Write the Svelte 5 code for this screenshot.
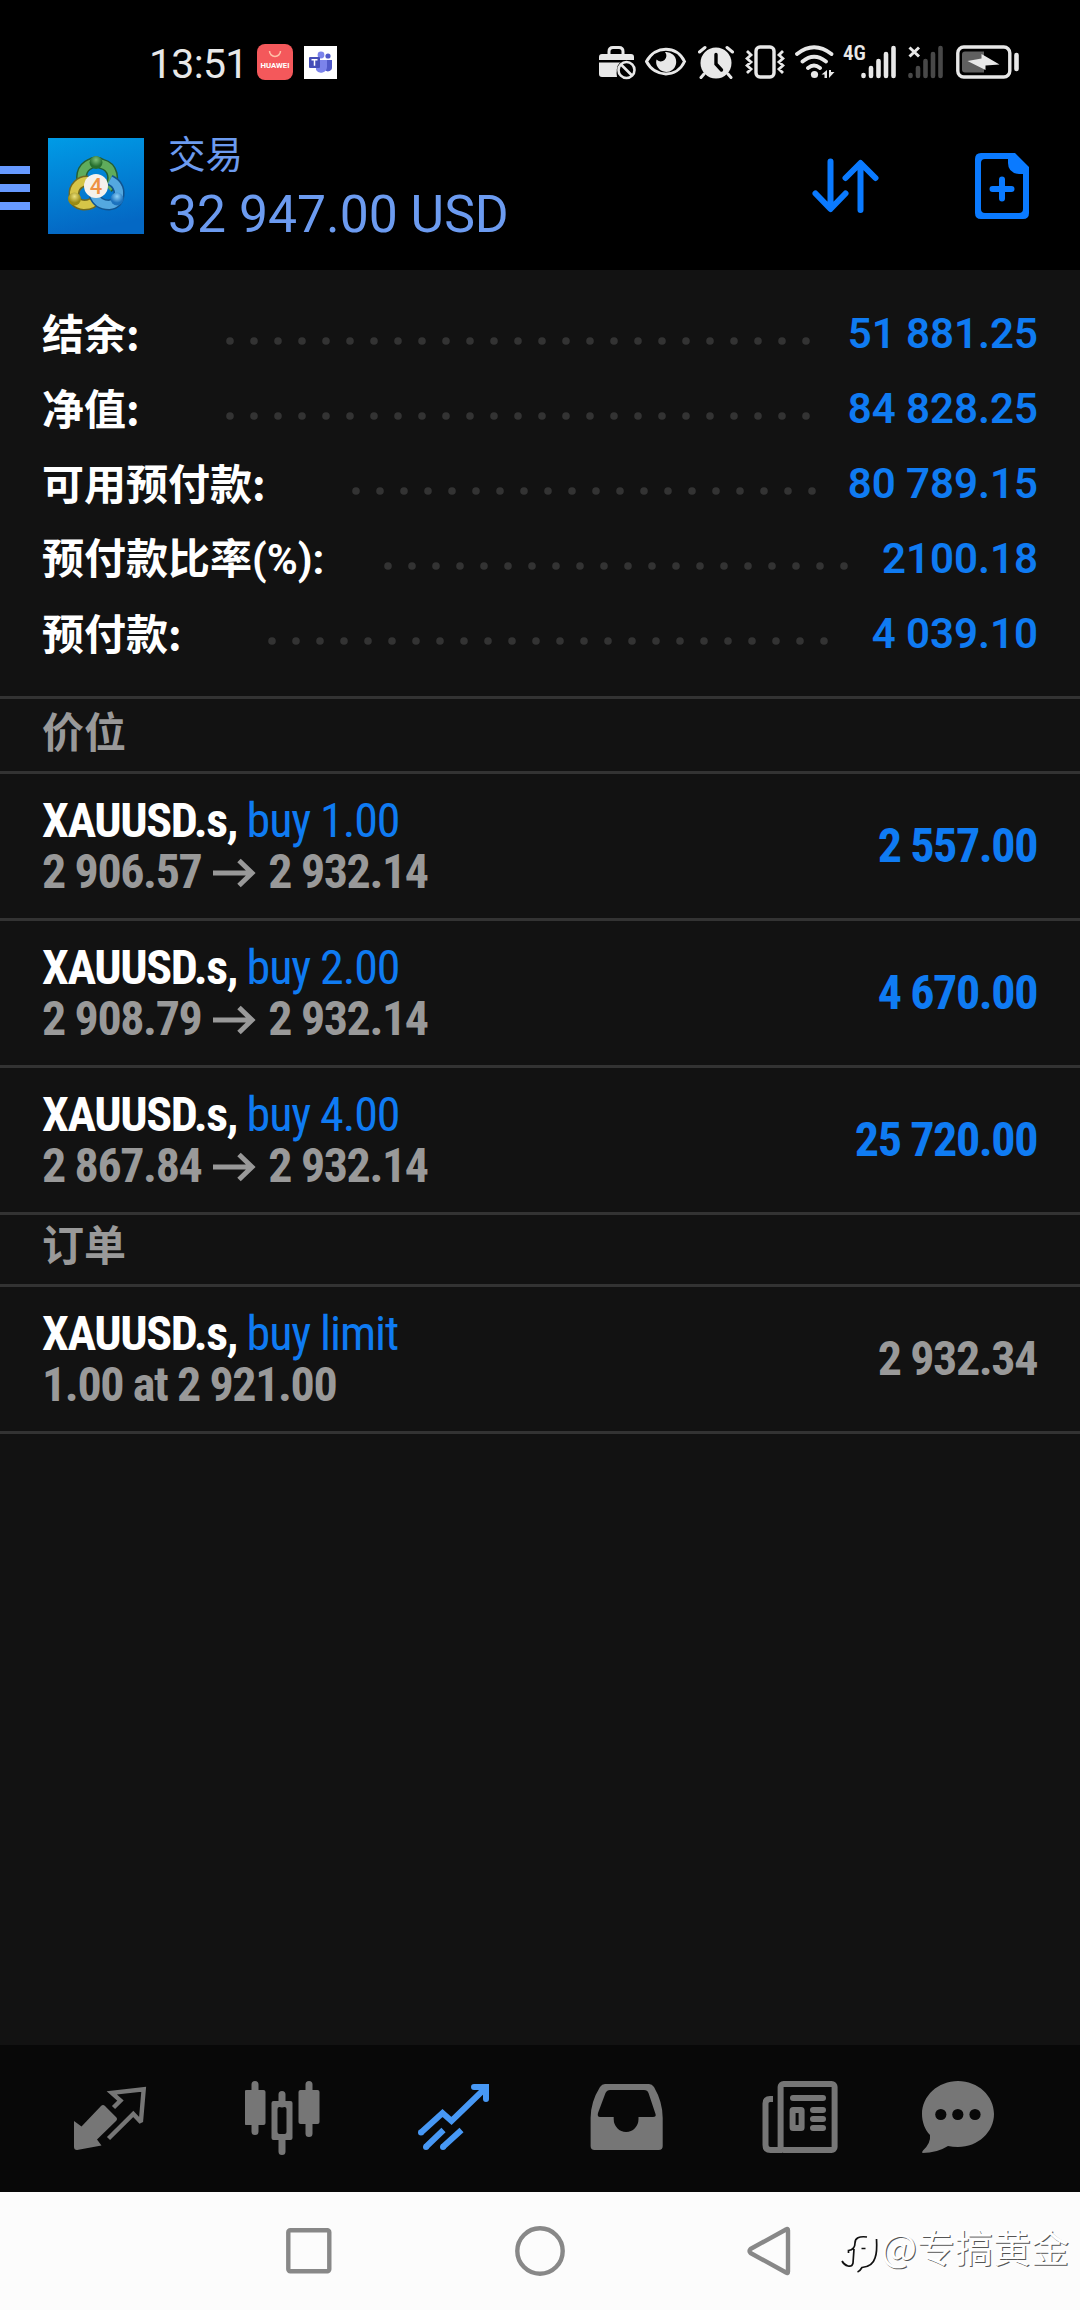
<script lang="ts">
	type Summary = { label: string; value: string; labelWidth: number; dots: number; mixed?: boolean };
	type Trade = { symbol: string; action: string; detail: string[]; amount: string; pending?: boolean };

	const DOT_STEP = 24;

	const summary: Summary[] = [
		{ label: '结余:', value: '51 881.25', labelWidth: 176, dots: 25 },
		{ label: '净值:', value: '84 828.25', labelWidth: 176, dots: 25 },
		{ label: '可用预付款:', value: '80 789.15', labelWidth: 302, dots: 20 },
		{ label: '预付款比率(%):', value: '2100.18', labelWidth: 334, dots: 20, mixed: true },
		{ label: '预付款:', value: '4 039.10', labelWidth: 218, dots: 24 },
	];

	const positions: Trade[] = [
		{ symbol: 'XAUUSD.s,', action: 'buy 1.00', detail: ['2 906.57', '2 932.14'], amount: '2 557.00' },
		{ symbol: 'XAUUSD.s,', action: 'buy 2.00', detail: ['2 908.79', '2 932.14'], amount: '4 670.00' },
		{ symbol: 'XAUUSD.s,', action: 'buy 4.00', detail: ['2 867.84', '2 932.14'], amount: '25 720.00' },
	];

	const orders: Trade[] = [
		{ symbol: 'XAUUSD.s,', action: 'buy limit', detail: ['1.00 at 2 921.00'], amount: '2 932.34', pending: true },
	];
</script>

{#snippet tradeRow(trade: Trade)}
	<div class="trade">
		<div class="trade-info">
			<div class="line"><b>{trade.symbol}</b> <span class="action">{trade.action}</span></div>
			<div class="line detail">
				<span>{trade.detail[0]}</span>
				{#if trade.detail.length > 1}
					<svg class="arrow" width="43" height="30" viewBox="0 0 43 30">
						<path d="M0 15H39M26 2.500L39 15L26 27.500" fill="none" stroke="currentColor" stroke-width="5" />
					</svg>
					<span>{trade.detail[1]}</span>
				{/if}
			</div>
		</div>
		<div class="amount" class:pending={trade.pending}>{trade.amount}</div>
	</div>
{/snippet}

<div class="screen">
	<div class="status">
		<span class="clock">13:51</span>
		<svg class="huawei" width="36" height="36" viewBox="0 0 36 36">
			<rect width="36" height="36" rx="8" fill="#f4585b" />
			<path d="M12.500 7a5.500 5.500 0 0 0 11 0" fill="none" stroke="#ffc0a8" stroke-width="1.500" />
			<text x="18" y="24" text-anchor="middle" textLength="29" lengthAdjust="spacingAndGlyphs" font-size="7.500" font-weight="700" fill="#fff">HUAWEI</text>
		</svg>
		<svg class="teams" width="33" height="33" viewBox="0 0 33 33">
			<rect width="33" height="33" fill="#fff" />
			<circle cx="24" cy="10" r="2.600" fill="#5059c9" />
			<path d="M21 14h7v7a4 4 0 0 1-7 3z" fill="#5059c9" />
			<circle cx="17" cy="9" r="3.400" fill="#7b83eb" />
			<path d="M12 14h11v7a6 6 0 0 1-11 3z" fill="#7b83eb" />
			<rect x="5" y="11" width="11" height="11" rx="1" fill="#464eb8" />
			<path d="M7.500 13.800h6M10.500 13.800v6" stroke="#fff" stroke-width="1.500" />
		</svg>

		<div class="status-icons">
			<svg width="38" height="36" viewBox="0 0 38 36">
				<path d="M10 11V7.500Q10 3.500 14 3.500h6Q24 3.500 24 7.500V11" fill="none" stroke="#e8e8e8" stroke-width="3" />
				<path d="M3 10H32Q35 10 35 13V16H0V13Q0 10 3 10zM0 18.500H23Q16 24 18 33H3Q0 33 0 30z" fill="#e8e8e8" />
				<circle cx="27.500" cy="26" r="9.800" fill="#000" />
				<path d="M22 20.500L33 31.500" stroke="#e8e8e8" stroke-width="2.600" />
				<circle cx="27.500" cy="26" r="8" fill="none" stroke="#e8e8e8" stroke-width="2.600" />
			</svg>
			<svg class="eye" width="42" height="36" viewBox="0 0 42 36">
				<path d="M1.500 17.500C10 1 32 1 39.500 17.500C32 34 10 34 1.500 17.500z" fill="none" stroke="#e8e8e8" stroke-width="3" />
				<path d="M20 8a10 10 0 1 1-8.500 7.500a5 5 0 0 0 8.500-7.500z" fill="#e8e8e8" />
			</svg>
			<svg class="alarm" width="36" height="36" viewBox="0 0 36 36">
				<circle cx="18" cy="19" r="15.500" fill="#e8e8e8" />
				<path d="M1.500 8L7 3.500M34.500 8L29 3.500M6 30L3 33.500M30 30L33 33.500" stroke="#e8e8e8" stroke-width="3" stroke-linecap="round" />
				<path d="M18 10.500V20L23.500 26" fill="none" stroke="#000" stroke-width="3.400" stroke-linecap="round" />
			</svg>
			<svg class="vibrate" width="40" height="36" viewBox="0 0 40 36">
				<rect x="11" y="3" width="18" height="30" rx="4" fill="none" stroke="#e8e8e8" stroke-width="3.400" />
				<path d="M2 7l4 4-4 3.500 4 3.500-4 3.500 4 3.500-4 4M38 7l-4 4 4 3.500-4 3.500 4 3.500-4 3.500 4 4" fill="none" stroke="#e8e8e8" stroke-width="2.800" />
			</svg>
			<svg class="wifi" width="42" height="36" viewBox="0 0 42 36">
				<path d="M2 10Q19 -3.500 36.500 10M7.500 17.500Q19 8 31 17.500M13 24Q19 19 25 24" fill="none" stroke="#e8e8e8" stroke-width="3.800" stroke-linecap="round" />
				<circle cx="19.500" cy="30.500" r="3.600" fill="#e8e8e8" />
				<path d="M26.500 30.500L32 26V34H29.500V30.500zM34 26V34L39.500 28H36V26z" fill="#e8e8e8" />
			</svg>
			<span class="net">4G</span>
			<svg class="signal" width="36" height="36" viewBox="0 0 36 36">
				<path d="M2.500 32V31M10 32V24M17.500 32V17M25 32V10M32.500 32V4" stroke="#e8e8e8" stroke-width="4.600" stroke-linecap="round" />
			</svg>
			<svg class="nosim" width="36" height="36" viewBox="0 0 36 36">
				<path d="M2.500 32V31M10 32V24M17.500 32V17M25 32V10M32.500 32V4" stroke="#484848" stroke-width="4.600" stroke-linecap="round" />
				<path d="M1.500 3.500L11 12.500M11 3.500L1.500 12.500" stroke="#e8e8e8" stroke-width="3" />
			</svg>
			<svg class="battery" width="64" height="36" viewBox="0 0 64 36">
				<rect x="1.800" y="3" width="52" height="30" rx="6" fill="none" stroke="#e8e8e8" stroke-width="3.400" />
				<path d="M9 7.500H28V28.500H9Q6 28.500 6 25.500V10.500Q6 7.500 9 7.500z" fill="#606060" />
				<path d="M11.500 17L25.500 14.500V10L43.500 20.500L29.500 21.500V26z" fill="#e8e8e8" />
				<path d="M60.500 11V25" stroke="#e8e8e8" stroke-width="4.600" stroke-linecap="round" />
			</svg>
		</div>
	</div>

	<header>
		<svg class="menu" width="30" height="44" viewBox="0 0 30 44">
			<path d="M0 4H30M0 22H30M0 40H30" stroke="#6699ff" stroke-width="8" />
		</svg>
		<svg class="logo" width="96" height="96" viewBox="0 0 96 96">
			<defs>
				<linearGradient id="sky" x1="0" y1="0" x2="0.200" y2="1">
					<stop offset="0" stop-color="#009be6" />
					<stop offset="1" stop-color="#0468c4" />
				</linearGradient>
				<radialGradient id="green" cy="0.300"><stop offset="0" stop-color="#7cc07a" /><stop offset="1" stop-color="#27702f" /></radialGradient>
				<radialGradient id="gold" cy="0.300"><stop offset="0" stop-color="#ece27c" /><stop offset="1" stop-color="#998a14" /></radialGradient>
				<radialGradient id="blue" cy="0.300"><stop offset="0" stop-color="#8fd2f8" /><stop offset="1" stop-color="#1c72be" /></radialGradient>
			</defs>
			<rect width="96" height="96" fill="url(#sky)" />
			<g fill="none">
				<path d="M37 48A14 14 0 0 1 42 26Q48 22 54 26A14 14 0 0 1 60 50" stroke="#245f35" stroke-width="11" />
				<path d="M37 48A14 14 0 0 1 42 26Q48 22 54 26A14 14 0 0 1 60 50" stroke="#5fac5c" stroke-width="8" />
				<path d="M40 43A13 13 0 0 0 26 57Q26 66 36 67Q45 67 49 60" stroke="#71691f" stroke-width="11" />
				<path d="M40 43A13 13 0 0 0 26 57Q26 66 36 67Q45 67 49 60" stroke="#d6c548" stroke-width="8" />
				<path d="M62 42Q72 47 71 57Q70 66 61 67Q50 67 46 57" stroke="#115490" stroke-width="11" />
				<path d="M62 42Q72 47 71 57Q70 66 61 67Q50 67 46 57" stroke="#54a8e0" stroke-width="8" />
			</g>
			<circle cx="48" cy="24.500" r="6.500" fill="url(#green)" />
			<circle cx="26.500" cy="61" r="6.500" fill="url(#gold)" />
			<circle cx="69" cy="61" r="6.500" fill="url(#blue)" />
			<circle cx="48" cy="48" r="12" fill="#f5f1ec" />
			<text x="48" y="56" text-anchor="middle" font-size="22" font-weight="500" fill="#ee9144">4</text>
		</svg>
		<div class="heading">
			<div class="title">交易</div>
			<div class="profit">32 947.00 USD</div>
		</div>
		<svg class="sort" width="68" height="56" viewBox="0 0 68 56">
			<path d="M18.500 3.500V50M3.500 35.500L18.500 51L33.500 35.500M48.500 52V6M33.500 20L48.500 5L63.500 20" fill="none" stroke="#0a7aff" stroke-width="6" stroke-linecap="round" stroke-linejoin="round" />
		</svg>
		<svg class="add" width="54" height="66" viewBox="0 0 54 66">
			<path d="M6 0H40L54 14V60Q54 66 48 66H6Q0 66 0 60V6Q0 0 6 0zM33 6H10Q6 6 6 10V56Q6 60 10 60H44Q48 60 48 56V21H44Q33 20 33 10z" fill="#0a7aff" fill-rule="evenodd" />
			<path d="M27 26.500V45.500M17.500 36H36.500" stroke="#0a7aff" stroke-width="6" stroke-linecap="round" />
		</svg>
	</header>

	<main>
		<section class="summary">
			{#each summary as row}
				<div class="summary-row">
					<span class="label" class:mixed={row.mixed} style="width: {row.labelWidth}px">{row.label}</span>
					<svg class="dots" width={row.dots * DOT_STEP} height="8">
						{#each { length: row.dots } as _, i}
							<circle cx={i * DOT_STEP + 12} cy="4" r="3.800" fill="#333" />
						{/each}
					</svg>
					<span class="value">{row.value}</span>
				</div>
			{/each}
		</section>

		<h2>价位</h2>
		{#each positions as trade}
			{@render tradeRow(trade)}
		{/each}

		<h2 class="orders">订单</h2>
		{#each orders as trade}
			{@render tradeRow(trade)}
		{/each}
	</main>

	<nav class="tabs">
		<svg width="76" height="76" viewBox="72 40 76 76">
			<path d="M74 81L81.500 86.500L101 66Q103 64 105 66L116 77Q118 79 116 81L97 99.500L101.500 105.500L77 110Q74 110 74 107z" fill="#767676" />
			<path d="M113.500 67.500L120.500 60.500L111.800 52.800L143.700 49.300L141 80.500L140 81L133.300 74L108.500 98.500" fill="none" stroke="#767676" stroke-width="4.400" />
		</svg>
		<svg width="76" height="76" viewBox="244.500 40 76 76">
			<path d="M254.500 44.500V91.500M281.500 54.500V64M281.500 98V111.500M308.500 44.500V93.500" stroke="#767676" stroke-width="7" stroke-linecap="round" />
			<rect x="244" y="50" width="21" height="35" rx="2" fill="#767676" />
			<rect x="298" y="50" width="21" height="34" rx="2" fill="#767676" />
			<path d="M273 61H290Q292 61 292 63V98Q292 100 290 100H273Q271 100 271 98V63Q271 61 273 61zM279 67Q277 67 277 69V92Q277 94 279 94H284Q286 94 286 92V69Q286 67 284 67z" fill="#767676" fill-rule="evenodd" />
		</svg>
		<svg width="76" height="76" viewBox="417 40 76 76">
			<g fill="none" stroke="#4798f5" stroke-width="6">
				<path d="M420.500 93L442.500 73L451.500 81L485 48.500" />
				<path d="M474 47H486V59" stroke-linecap="round" />
				<path d="M425.800 107L443.500 90M442.800 107L461.500 90" />
			</g>
			<g fill="#4798f5">
				<circle cx="421" cy="92.500" r="3" />
				<circle cx="426" cy="107" r="3" />
				<circle cx="443" cy="107" r="3" />
			</g>
		</svg>
		<svg width="76" height="76" viewBox="50 40 76 76">
			<path d="M65 44H109Q112 44 114 47Q122.700 62 122.700 78V106Q122.700 110 118.700 110H54.600Q50.600 110 50.600 106V78Q50.600 62 60 47Q62 44 65 44zM70 50Q67 50 65.500 53L58 73Q57 77 60 77H73.700V79A12.400 13 0 0 0 98.500 79V77H113Q116.500 77 115.500 74L108.500 53Q107.500 50 104 50z" fill="#767676" fill-rule="evenodd" />
		</svg>
		<svg width="76" height="76" viewBox="222 40 76 76">
			<g fill="none" stroke="#767676" stroke-width="6">
				<rect x="240.600" y="44" width="54" height="66" rx="3" />
				<path d="M233 59H230Q225.500 59 225.500 63.500V105Q225.500 110 230.500 110H242" />
				<rect x="252.600" y="70" width="9" height="18" rx="0.500" />
			</g>
			<path d="M253 58H283M273 70H283M273 79H283M273 88H283" stroke="#767676" stroke-width="6" stroke-linecap="round" />
		</svg>
		<svg width="76" height="76" viewBox="381 40 76 76">
			<path d="M418 41C438 41 454 56 454 74S438 107 418 107Q412.500 107 408 106Q397 113 382.500 113Q381.500 112 383 110.500Q391 103 390 95C385 90 382 82 382 74C382 56 398 41 418 41z" fill="#767676" />
			<circle cx="400.800" cy="74.500" r="5.600" fill="#080808" />
			<circle cx="417.800" cy="74.500" r="5.600" fill="#080808" />
			<circle cx="435" cy="74.500" r="5.600" fill="#080808" />
		</svg>
	</nav>

	<footer>
		<svg class="recent" width="46" height="46" viewBox="0 0 46 46">
			<rect x="2.300" y="2.300" width="41" height="41" rx="2" fill="none" stroke="#888" stroke-width="4.400" />
		</svg>
		<svg class="home" width="50" height="50" viewBox="0 0 50 50">
			<circle cx="25" cy="25" r="22.700" fill="none" stroke="#888" stroke-width="4.400" />
		</svg>
		<svg class="back" width="44" height="50" viewBox="0 0 44 50">
			<path d="M41 4.500Q41 2 39 3.500L3.500 23Q1.500 25 3.500 27L39 46.500Q41 48 41 45.500z" fill="none" stroke="#888" stroke-width="4.400" stroke-linejoin="round" />
		</svg>
		<div class="watermark">
			<svg width="40" height="48" viewBox="0 0 40 48">
				<path d="M26 10C18 9 14 11 14 16C14 21 11 23 7.500 23.500V26M13 22L12 36Q11 40 7 39Q3 38 1 34M20.500 21.500H24.500M35.500 12C36 20 36 26 34 31C32 38 27 40 21 40.500Q19 44 16.500 45" fill="none" stroke="#111" stroke-width="1.700" />
			</svg>
			<span>@专搞黄金</span>
		</div>
	</footer>
</div>

<style>
	:global(body) {
		margin: 0;
		background: #121212;
	}

	.screen {
		display: flex;
		flex-direction: column;
		width: 1080px;
		height: 2310px;
		overflow: hidden;
		background: #121212;
		color: #fff;
		font-family: Roboto, "Noto Sans CJK SC", sans-serif;
	}

	svg {
		display: block;
		flex: none;
	}

	.status {
		display: flex;
		align-items: center;
		height: 124px;
		padding: 0 60px 0 149px;
		box-sizing: border-box;
		background: #000;
	}

	.clock {
		width: 108px;
		color: #e8e8e8;
		font-size: 41px;
		letter-spacing: -0.700px;
		line-height: 48px;
		padding-top: 4px;
	}

	.teams {
		margin-left: 11px;
	}

	.status-icons {
		display: flex;
		align-items: center;
		margin-left: auto;
	}

	.eye {
		margin-left: 8px;
	}

	.alarm {
		margin-left: 11px;
	}

	.vibrate {
		margin-left: 11px;
	}

	.wifi {
		margin-left: 10px;
	}

	.net {
		width: 24px;
		color: #e8e8e8;
		font-family: "Roboto Condensed", Roboto, sans-serif;
		font-size: 21px;
		font-weight: 600;
		line-height: 20px;
		margin: 0 0 18px 6px;
	}

	.signal {
		margin-left: -6px;
	}

	.nosim {
		margin-left: 11px;
	}

	.battery {
		margin-left: 12px;
	}

	header {
		display: flex;
		height: 146px;
		background: #000;
	}

	.menu {
		margin: 42px 18px 0 0;
	}

	.logo {
		margin-top: 14px;
	}

	.heading {
		flex: 1;
		margin-left: 24px;
		color: #6c9bf0;
	}

	.title {
		margin-top: 11px;
		font-size: 37.500px;
		line-height: 40px;
	}

	.profit {
		margin-top: 10px;
		font-size: 51.700px;
		line-height: 60px;
		white-space: nowrap;
	}

	.sort {
		margin: 34px 95px 0 0;
	}

	.add {
		margin: 29px 51px 0 0;
	}

	main {
		flex: 1;
	}

	.summary {
		height: 426px;
		padding: 26px 42px 0 42px;
		box-sizing: border-box;
	}

	.summary-row {
		display: flex;
		align-items: center;
		height: 75px;
		font-size: 42px;
		line-height: 75px;
		white-space: nowrap;
	}

	.label {
		padding-bottom: 5px;
		font-family: "Noto Sans CJK SC", sans-serif;
		font-weight: 700;
	}

	/* Latin punctuation falls to Roboto in the label that carries a unit */
	.label.mixed {
		padding: 2px 0 0;
		font-family: Roboto, "Noto Sans CJK SC", sans-serif;
	}

	.dots {
		margin-top: 14px;
	}

	.value {
		margin-left: auto;
		color: #0f7bf2;
		font-weight: 600;
	}

	h2 {
		height: 75px;
		margin: 0;
		padding-left: 42px;
		box-sizing: border-box;
		border-top: 3px solid #333;
		color: #999;
		font-size: 42px;
		font-weight: 700;
		line-height: 69px;
	}

	h2.orders {
		height: 72px;
		line-height: 63px;
	}

	.trade {
		display: flex;
		justify-content: space-between;
		height: 147px;
		padding: 21px 43px 0 42px;
		box-sizing: border-box;
		border-top: 3px solid #333;
	}

	.trade:last-child {
		height: 150px;
		border-bottom: 3px solid #333;
	}

	.line,
	.amount {
		font-family: "Roboto Condensed", Roboto, sans-serif;
		font-size: 48px;
		letter-spacing: -1.400px;
		line-height: 51px;
		white-space: nowrap;
	}

	.action {
		color: #0f7bf2;
		letter-spacing: -1.100px;
	}

	.detail {
		display: flex;
		align-items: center;
		gap: 12px;
		color: #999;
		font-weight: 700;
	}

	.arrow {
		margin-top: 3px;
	}

	.amount {
		margin-top: 25px;
		color: #0f7bf2;
		font-weight: 700;
	}

	.amount.pending {
		color: #999;
	}

	.tabs {
		display: grid;
		grid-template-columns: repeat(5, 172.500px) 144px;
		justify-items: center;
		height: 147px;
		padding: 35px 0 0 24px;
		box-sizing: border-box;
		background: #080808;
	}

	footer {
		display: flex;
		align-items: center;
		height: 118px;
		background: #fcfcfc;
	}

	.recent {
		margin-left: 286px;
	}

	.home {
		margin-left: 183px;
	}

	.back {
		margin-left: 182px;
	}

	.watermark {
		display: flex;
		align-items: center;
		margin-left: 50px;
		color: #fff;
		font-family: "Noto Sans CJK SC", sans-serif;
		font-size: 38px;
		line-height: 48px;
		text-shadow: 1px 1px 0 #555;
		white-space: nowrap;
	}

	.watermark span {
		margin: -10px 0 0 0;
	}
</style>
